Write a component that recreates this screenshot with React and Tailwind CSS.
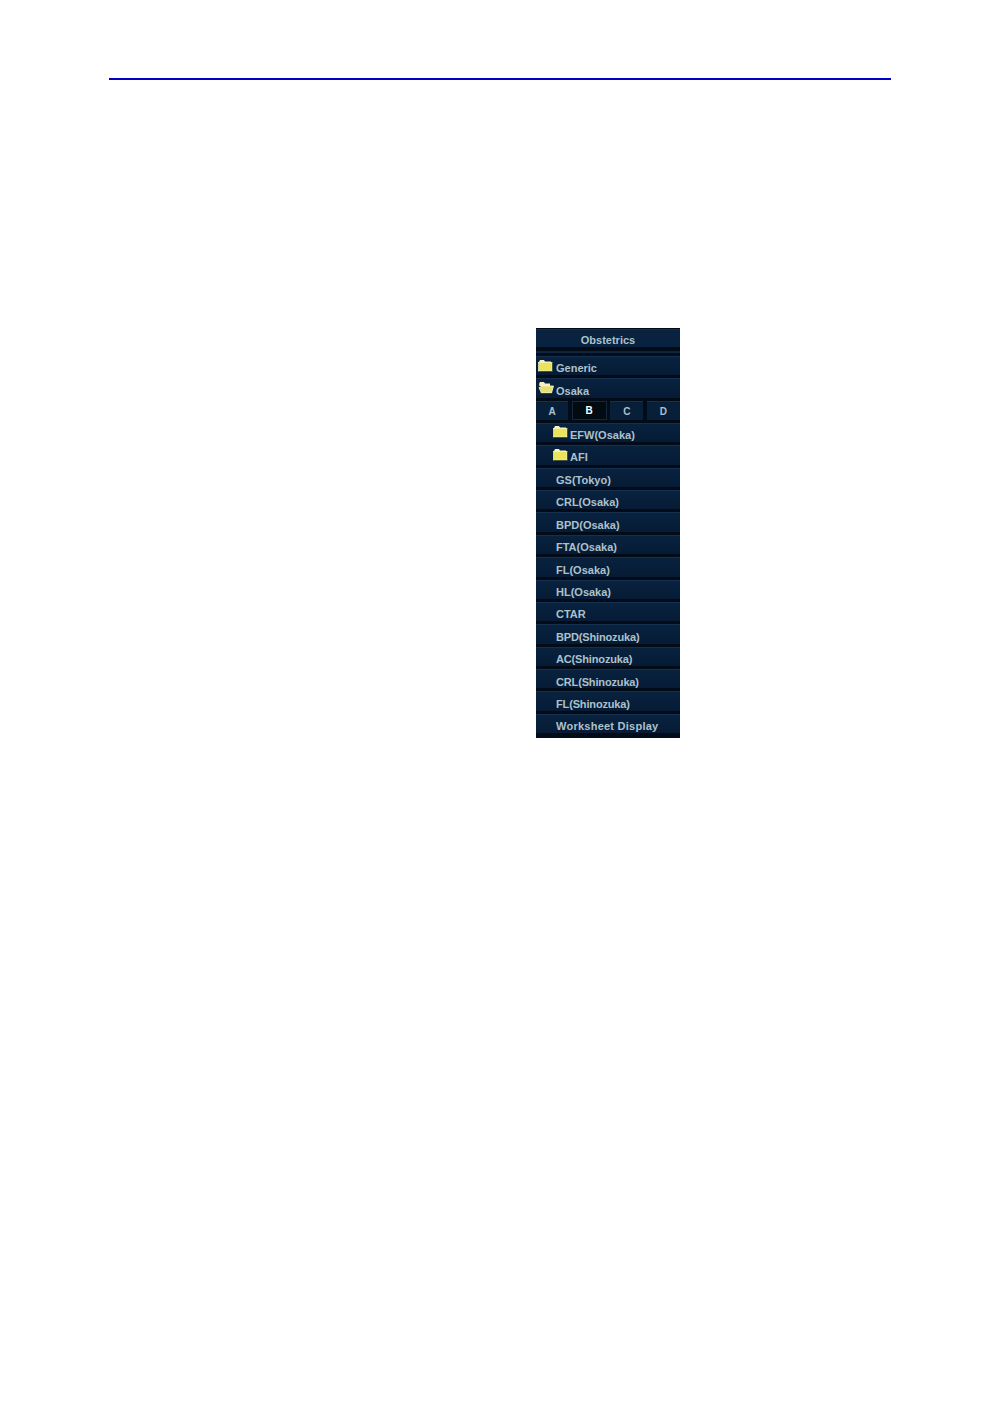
const rows = [
  { label: 'GS(Tokyo)' },
  { label: 'CRL(Osaka)' },
  { label: 'BPD(Osaka)' },
  { label: 'FTA(Osaka)' },
  { label: 'FL(Osaka)' },
  { label: 'HL(Osaka)' },
  { label: 'CTAR' },
  { label: 'BPD(Shinozuka)', track: 'tracking-[-0.15px]' },
  { label: 'AC(Shinozuka)', track: 'tracking-[-0.15px]' },
  { label: 'CRL(Shinozuka)', track: 'tracking-[-0.15px]' },
  { label: 'FL(Shinozuka)', track: 'tracking-[-0.15px]' },
  { label: 'Worksheet Display', track: 'tracking-[0.25px]' },
];

function Folder({ open }) {
  if (open) {
    return (
      <svg width="16" height="13" viewBox="0 0 16 13" className="shrink-0">
        <path d="M1 3 L2 1 H6 L7 2.5 H12 V5 H1 Z" fill="#f5f1c4" />
        <path d="M1 3 V6 L3 12 H13 V4" fill="none" stroke="#3c3c20" strokeWidth="0.6" />
        <path d="M3 5 H15.5 L13.5 12 H3.5 L1 6.5 H2.5 Z" fill="#e6e070" stroke="#fbf8d4" strokeWidth="0.8" />
        <path d="M1 12.6 H14" stroke="#2a2a18" strokeWidth="0.8" />
      </svg>
    );
  }
  return (
    <svg width="16" height="13" viewBox="0 0 16 13" className="shrink-0">
      <path d="M1 3 L2 1 H6 L7 2.5 H13 V4 H1 Z" fill="#f5f1c0" />
      <rect x="0.5" y="3.5" width="13.5" height="8.5" fill="#e8e45c" stroke="#f7f4c0" strokeWidth="0.7" />
      <path d="M14.6 4 V12.6 H1" fill="none" stroke="#45452a" strokeWidth="0.8" />
    </svg>
  );
}

function Row({ children }) {
  return (
    <div className="h-[22.4px] shrink-0 flex flex-col">
      <div className="h-px bg-[#15304c]" />
      <div className="flex-1 min-h-0 flex items-center bg-gradient-to-b from-[#08223f] to-[#061b35] text-[11px] font-bold text-[#adc1cb] pt-[5px]">
        {children}
      </div>
      <div className="h-[3px] bg-[#020c18]" />
    </div>
  );
}

function Tab({ label, active, width }) {
  return (
    <div
      className={`h-[19px] pt-px flex items-center justify-center text-[10px] font-bold ${width} ${
        active
          ? 'bg-[#020a12] text-white border border-[#16283a]'
          : 'bg-[#081f3a] text-[#adc1cb] border-t border-[#15304c]'
      }`}
    >
      {label}
    </div>
  );
}

export default function App() {
  return (
    <div className="min-h-[1418px] bg-white pt-[78px] font-['Liberation_Sans',Arial,sans-serif]">
      <div className="ml-[109px] w-[782px] h-[2px] bg-[#0000c8]" />

      <div className="ml-[536px] mt-[248px] w-[144px] h-[410px] flex flex-col bg-[#020c18]">
        {/* Title */}
        <div className="h-[18px] mt-px bg-[#08223f] border-t border-[#15304c] flex items-center justify-center text-[11px] font-bold text-[#adc1cb] pt-[4px] shrink-0">
          Obstetrics
        </div>
        <div className="h-[9px] shrink-0 flex flex-col justify-center bg-[#020c18]">
          <div className="h-[2px] bg-[#0e2540]" />
        </div>

        <Row>
          <div className="flex items-center pl-[2px] gap-[2px] -mt-[7px]">
            <Folder />
            <span className="mt-[7px]">Generic</span>
          </div>
        </Row>
        <Row>
          <div className="flex items-center pl-[2px] gap-[2px] -mt-[7px]">
            <Folder open />
            <span className="mt-[7px]">Osaka</span>
          </div>
        </Row>

        {/* A B C D */}
        <div className="h-[22px] shrink-0 flex justify-between items-start bg-[#020c18]">
          <Tab label="A" width="w-[32px]" />
          <Tab label="B" active width="w-[35px]" />
          <Tab label="C" width="w-[33px]" />
          <Tab label="D" width="w-[33px]" />
        </div>

        <Row>
          <div className="flex items-center pl-[17px] gap-[1px] -mt-[7px]">
            <Folder />
            <span className="mt-[7px]">EFW(Osaka)</span>
          </div>
        </Row>
        <Row>
          <div className="flex items-center pl-[17px] gap-[1px] -mt-[7px]">
            <Folder />
            <span className="mt-[7px] -translate-y-px">AFI</span>
          </div>
        </Row>

        {rows.map((r, i) => (
          <Row key={i}>
            <span className={`pl-[20px] ${r.track || ''}`}>{r.label}</span>
          </Row>
        ))}
      </div>
    </div>
  );
}
